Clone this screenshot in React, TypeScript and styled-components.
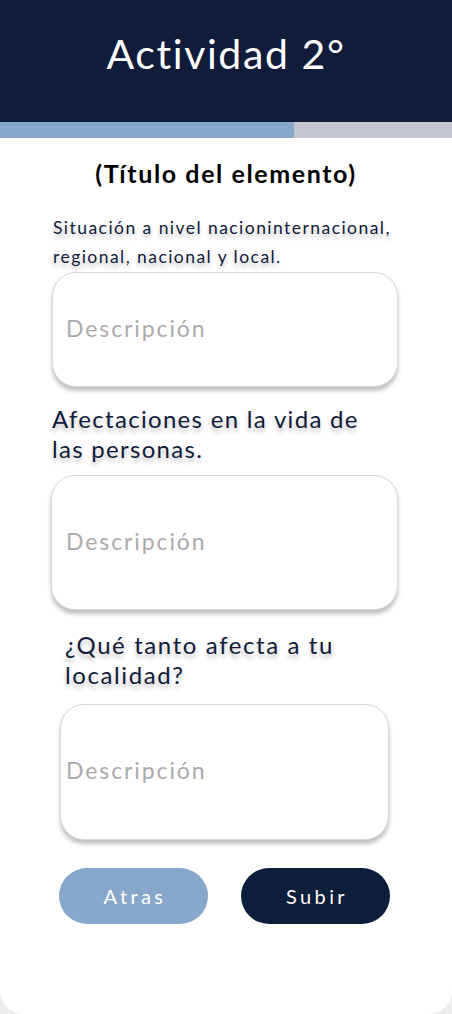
import React from "react";
import styled, { createGlobalStyle } from "styled-components";

const GlobalStyle = createGlobalStyle`
  html, body { margin: 0; padding: 0; background: #eeeeee; }
  * { box-sizing: border-box; }
  body { font-family: "Lato", "Open Sans", sans-serif; }
`;

const Screen = styled.div`
  width: 452px;
  height: 1014px;
  background: #ffffff;
  border-radius: 0 0 24px 24px;
  overflow: hidden;
  display: flex;
  flex-direction: column;
`;

const Header = styled.header`
  height: 122px;
  background: #111c3a;
  display: flex;
  align-items: center;
  justify-content: center;
  padding-bottom: 16px;
`;

const HeaderTitle = styled.h1`
  margin: 0;
  color: #ffffff;
  font-family: "Lato", sans-serif;
  font-weight: 400;
  font-size: 41px;
  letter-spacing: 1.6px;
`;

const Progress = styled.div`
  height: 16px;
  background: #c3c6ce;
  display: flex;
`;

const ProgressFill = styled.div`
  height: 100%;
  background: #88a8cb;
`;

const Body = styled.main`
  display: flex;
  flex-direction: column;
  padding: 19px 0 0;
`;

const ElementTitle = styled.h2`
  margin: 0 0 24px;
  text-align: center;
  font-family: "Lato", sans-serif;
  font-weight: 700;
  font-size: 25px;
  letter-spacing: 1.6px;
  color: #000000;
  line-height: 32px;
`;

const Label = styled.p<{ $size: number; $left: number; $width: number; $lh: number; $spacing: number }>`
  margin: 0 0 0 ${(p) => p.$left}px;
  width: ${(p) => p.$width}px;
  font-family: "Lato", sans-serif;
  font-size: ${(p) => p.$size}px;
  line-height: ${(p) => p.$lh}px;
  letter-spacing: ${(p) => p.$spacing}px;
  color: #111c3a;
  text-shadow: 0 4px 4px rgba(0, 0, 0, 0.25);
`;

const Field = styled.div<{ $left: number; $width: number; $height: number; $top: number }>`
  margin: ${(p) => p.$top}px 0 0 ${(p) => p.$left}px;
  width: ${(p) => p.$width}px;
  height: ${(p) => p.$height}px;
  border: 1px solid #d8d8d8;
  border-radius: 24px;
  background: #ffffff;
  box-shadow: 0 4px 4px rgba(0, 0, 0, 0.25);
  display: flex;
  align-items: center;
  padding-left: ${(p) => 65 - p.$left}px;
  padding-bottom: ${(p) => (p.$height > 120 ? 4 : 4)}px;
`;

const Placeholder = styled.span`
  font-family: "Lato", sans-serif;
  font-size: 23px;
  letter-spacing: 1.9px;
  color: #ababab;
`;

const Buttons = styled.div`
  display: flex;
  gap: 33px;
  margin: 28px 0 0 59px;
`;

const Button = styled.button<{ $primary?: boolean }>`
  width: 149px;
  height: 56px;
  border: none;
  border-radius: 28px;
  background: ${(p) => (p.$primary ? "#0d1e3a" : "#87a8cb")};
  color: #ffffff;
  font-family: "Lato", sans-serif;
  font-size: 20px;
  letter-spacing: 3.4px;
  padding: 0 0 0 3px;
  cursor: pointer;
`;

export default function App() {
  return (
    <>
      <GlobalStyle />
      <Screen>
        <Header>
          <HeaderTitle>Actividad 2°</HeaderTitle>
        </Header>
        <Progress>
          <ProgressFill style={{ width: "65%" }} />
        </Progress>
        <Body>
          <ElementTitle>(Título del elemento)</ElementTitle>
          <Label $size={17.5} $left={53} $width={380} $lh={29} $spacing={1.45}>
            Situación a nivel nacioninternacional, regional, nacional y local.
          </Label>
          <Field $left={52} $width={346} $height={115} $top={1}>
            <Placeholder>Descripción</Placeholder>
          </Field>
          <Label $size={24} $left={52} $width={345} $lh={30} $spacing={1.3} style={{ marginTop: 17 }}>
            Afectaciones en la vida de las personas.
          </Label>
          <Field $left={51} $width={347} $height={135} $top={11}>
            <Placeholder>Descripción</Placeholder>
          </Field>
          <Label $size={24} $left={65} $width={300} $lh={30} $spacing={1.6} style={{ marginTop: 20 }}>
            ¿Qué tanto afecta a tu localidad?
          </Label>
          <Field $left={60} $width={329} $height={136} $top={14}>
            <Placeholder>Descripción</Placeholder>
          </Field>
          <Buttons>
            <Button>Atras</Button>
            <Button $primary>Subir</Button>
          </Buttons>
        </Body>
      </Screen>
    </>
  );
}
